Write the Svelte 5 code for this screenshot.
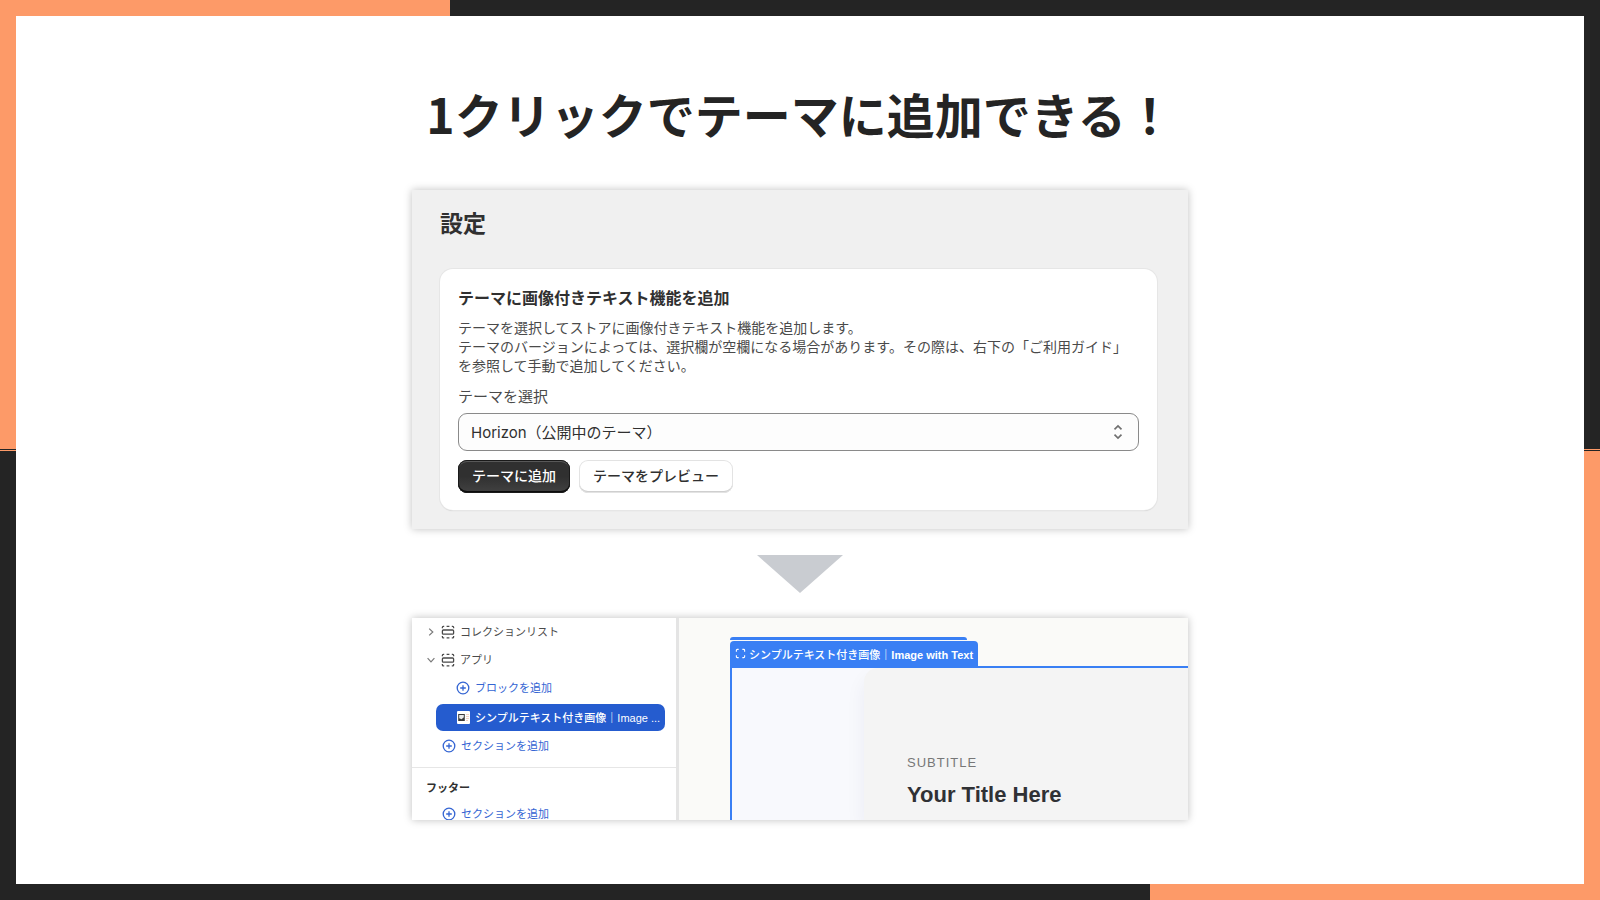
<script>
  let theme = $state('horizon');
  let selected = $state(true);
</script>

{#snippet plus()}
  <svg class="icon" viewBox="0 0 14 14" aria-hidden="true">
    <circle cx="7" cy="7" r="5.8" />
    <path d="M7 4.2v5.6M4.2 7h5.6" />
  </svg>
{/snippet}

{#snippet section()}
  <svg class="icon" viewBox="0 0 14 14" aria-hidden="true">
    <rect x="1.4" y="5" width="11.2" height="4.2" rx="1" />
    <path d="M1.4 3.2V2.2q0-.9.9-.9h.9M5.6 1.3h2.8M10.8 1.3h.9q.9 0 .9.9v1M1.4 11v1q0 .9.9.9h.9M5.6 12.9h2.8M10.8 12.9h.9q.9 0 .9-.9v-1" />
  </svg>
{/snippet}

<main class="frame">
  <div class="slide">
    <h1>1クリックでテーマに追加できる！</h1>

    <section class="panel settings">
      <h2>設定</h2>
      <form class="card" onsubmit={(e) => e.preventDefault()}>
        <h3>テーマに画像付きテキスト機能を追加</h3>
        <p>
          テーマを選択してストアに画像付きテキスト機能を追加します。<br />
          テーマのバージョンによっては、選択欄が空欄になる場合があります。その際は、右下の「ご利用ガイド」を参照して手動で追加してください。
        </p>
        <label for="theme">テーマを選択</label>
        <div class="select">
          <select id="theme" bind:value={theme}>
            <option value="horizon">Horizon（公開中のテーマ）</option>
          </select>
          <svg viewBox="0 0 12 16" aria-hidden="true">
            <path d="M2.5 5.3 6 2l3.5 3.3M2.5 10.7 6 14l3.5-3.3" />
          </svg>
        </div>
        <div class="buttons">
          <button class="primary" type="submit">テーマに追加</button>
          <button class="secondary" type="button">テーマをプレビュー</button>
        </div>
      </form>
    </section>

    <svg class="arrow" viewBox="0 0 86 38" aria-hidden="true">
      <path d="M0 0h86L43 38z" />
    </svg>

    <section class="panel editor">
      <nav>
        <button class="row">
          <svg class="chevron" viewBox="0 0 10 10" aria-hidden="true"><path d="M3.2 1.6 6.8 5 3.2 8.4" /></svg>
          {@render section()}コレクションリスト
        </button>
        <button class="row">
          <svg class="chevron" viewBox="0 0 10 10" aria-hidden="true"><path d="M1.6 3.2 5 6.8l3.4-3.6" /></svg>
          {@render section()}アプリ
        </button>
        <button class="row add nested">{@render plus()}ブロックを追加</button>
        <button class="row block" class:selected onclick={() => (selected = !selected)}>
          <svg class="thumb" viewBox="0 0 13 13" aria-hidden="true">
            <rect width="13" height="13" rx="1" fill="#fff" />
            <rect x="1.2" y="3" width="6.6" height="7" fill="#3a3a3a" />
            <path d="M2.2 4h4.6v2.2L4.6 8.2 2.2 7.2z" fill="#e9e9e9" />
            <path d="M9 3.5h3M9 5.5h3M9 7.5h3M9 9.5h2" stroke="#f3d3c4" stroke-width="1" />
          </svg>
          シンプルテキスト付き画像｜Image ...
        </button>
        <button class="row add">{@render plus()}セクションを追加</button>
        <h4>フッター</h4>
        <button class="row add">{@render plus()}セクションを追加</button>
      </nav>
      <div class="preview">
        <div class="tabs">
          <div class="tab-back"></div>
          <div class="tab">
            <svg viewBox="0 0 12 12" aria-hidden="true">
              <path d="M1.5 4V2.5q0-1 1-1H4M8 1.5h1.5q1 0 1 1V4M10.5 8v1.5q0 1-1 1H8M4 10.5H2.5q-1 0-1-1V8" />
            </svg>
            <span>シンプルテキスト付き画像｜<b>Image with Text</b></span>
          </div>
        </div>
        <div class="outline">
          <article>
            <div class="subtitle">SUBTITLE</div>
            <div class="title">Your Title Here</div>
          </article>
        </div>
      </div>
    </section>
  </div>
</main>

<style>
  :global(body) {
    margin: 0;
    font-family: "Noto Sans CJK JP", sans-serif;
    color: #303030;
  }
  .frame {
    --orange: #fd9a68;
    --dark: #242424;
    box-sizing: border-box;
    min-height: 100vh;
    padding: 16px;
    display: flex;
    background:
      linear-gradient(to right, var(--orange) 50vh, var(--dark) 50vh) top / 100% 16px no-repeat,
      linear-gradient(to left, var(--orange) 50vh, var(--dark) 50vh) bottom / 100% 16px no-repeat,
      linear-gradient(var(--orange) calc(50% - 1px), var(--dark) calc(50% - 1px) 50%, var(--orange) 50% calc(50% + 1px), var(--dark) calc(50% + 1px)) left / 16px 100% no-repeat,
      linear-gradient(var(--dark) calc(50% - 1px), var(--orange) calc(50% - 1px) 50%, var(--dark) 50% calc(50% + 1px), var(--orange) calc(50% + 1px)) right / 16px 100% no-repeat;
  }
  .slide {
    flex: 1;
    display: flex;
    flex-direction: column;
    align-items: center;
    padding: 65px 16px 48px;
    background: #fff;
  }
  h1,
  h2,
  h3,
  h4,
  p {
    margin: 0;
  }
  h1 {
    margin-bottom: 45px;
    font-size: 48px;
    line-height: 64px;
    color: #242424;
  }
  button,
  select {
    font: inherit;
    color: inherit;
    cursor: pointer;
  }
  svg {
    flex: none;
    fill: none;
    stroke: currentColor;
  }
  .panel {
    box-sizing: border-box;
    width: 100%;
    max-width: 776px;
    box-shadow: 0 0 8px rgba(0, 0, 0, 0.25);
  }
  .settings {
    padding: 16px 31px 19px 28px;
    background: #f0f0f0;
  }
  h2 {
    margin-bottom: 31px;
    font-size: 23px;
    line-height: 32px;
  }
  .card {
    padding: 16px 18px 17px;
    border-radius: 13px;
    background: #fff;
    box-shadow: 0 0 0 1px #e6e6e6, 0 1px 1px #c8c8c8;
  }
  h3 {
    margin-bottom: 9px;
    font-size: 16px;
    line-height: 24px;
  }
  p {
    margin-bottom: 10px;
    font-size: 14px;
    line-height: 19px;
    color: #4a4a4a;
  }
  label {
    display: block;
    margin-bottom: 6px;
    font-size: 15px;
    line-height: 22px;
    color: #4a4a4a;
  }
  .select {
    position: relative;
    margin-bottom: 9px;
  }
  .select select {
    appearance: none;
    display: block;
    width: 100%;
    height: 38px;
    padding: 0 36px 0 12px;
    border: 1px solid #8a8a8a;
    border-radius: 9px;
    background: #fdfdfd;
    font-family: Inter, "Noto Sans CJK JP", sans-serif;
    font-size: 15px;
  }
  .select svg {
    position: absolute;
    right: 15px;
    top: 11px;
    width: 12px;
    height: 16px;
    stroke: #707070;
    stroke-width: 1.7;
    pointer-events: none;
  }
  .buttons {
    display: flex;
    gap: 9px;
  }
  .buttons button {
    height: 33px;
    padding: 0 14px 3px;
    border: 0;
    border-radius: 9px;
    font-size: 14px;
    font-weight: 500;
    line-height: 20px;
  }
  .primary {
    background: linear-gradient(#303030 50%, #424242);
    color: #fff;
    box-shadow: inset 0 0 0 1px #1a1a1a, inset 0 2px 0 #585858, inset 0 -2px 0 #0c0c0c;
  }
  .secondary {
    background: #fff;
    box-shadow: inset 0 0 0 1px #e3e3e3, inset 0 -2px 0 #cfcfcf;
  }
  .arrow {
    width: 86px;
    height: 38px;
    margin: 26px 0 25px;
    fill: #c9ccd1;
    stroke: none;
  }
  .editor {
    display: flex;
    height: 202px;
    overflow: hidden;
    font-family: "Liberation Sans", "Noto Sans CJK JP", sans-serif;
  }
  nav {
    flex: none;
    width: 264px;
    background: #fff;
  }
  .row {
    box-sizing: border-box;
    display: flex;
    align-items: center;
    gap: 5px;
    width: 100%;
    height: 28px;
    padding: 0 0 0 14px;
    border: 0;
    background: none;
    font-size: 11px;
    line-height: 16px;
    text-align: left;
    white-space: nowrap;
    color: #4a4a4a;
  }
  .icon {
    width: 14px;
    height: 14px;
    stroke-width: 1.3;
  }
  .chevron {
    width: 10px;
    height: 10px;
    stroke: #7a7a7a;
    stroke-width: 1.2;
  }
  .add {
    padding-left: 30px;
    color: #3465d3;
  }
  .nested {
    padding-left: 44px;
  }
  .block {
    width: 229px;
    height: 27px;
    margin: 2px 0 1px 24px;
    padding-left: 21px;
    border-radius: 7px;
  }
  .block.selected {
    background: #255ccf;
    color: #fff;
    font-weight: 500;
  }
  .thumb {
    width: 13px;
    height: 13px;
    stroke: none;
  }
  h4 {
    margin-top: 7px;
    padding: 8px 0 0 14px;
    border-top: 1px solid #e6e6e6;
    font-size: 11px;
    line-height: 24px;
  }
  .preview {
    flex: 1;
    display: flex;
    flex-direction: column;
    min-width: 0;
    padding: 19px 0 0 51px;
    border-left: 3px solid #e4e4e4;
    background: #fafaf8;
  }
  .tabs {
    width: fit-content;
  }
  .tab-back {
    height: 3px;
    margin: 0 11px 1px 0;
    border-radius: 3px 3px 0 0;
    background: #397ff4;
  }
  .tab {
    display: flex;
    align-items: center;
    gap: 3px;
    height: 25px;
    padding: 0 5px;
    border-radius: 4px 4px 0 0;
    background: #397ff4;
    color: #fff;
    font-size: 11px;
    font-weight: 500;
    white-space: nowrap;
  }
  .tab svg {
    width: 11px;
    height: 11px;
    stroke-width: 1.2;
  }
  .outline {
    flex: 1;
    display: flex;
    padding-left: 132px;
    border: solid #397ff4;
    border-width: 2px 0 0 2px;
    background: #f8f9fd;
    overflow: hidden;
  }
  article {
    flex: 1;
    padding: 86px 16px 16px 43px;
    border-radius: 14px 0 0 0;
    background: #f4f4f4;
    box-shadow: 0 10px 20px rgba(30, 40, 80, 0.06);
  }
  .subtitle {
    margin-bottom: 10px;
    font-size: 13px;
    line-height: 18px;
    letter-spacing: 1px;
    color: #777;
  }
  .title {
    font-size: 22px;
    font-weight: bold;
    line-height: 26px;
    color: #303135;
  }
</style>
